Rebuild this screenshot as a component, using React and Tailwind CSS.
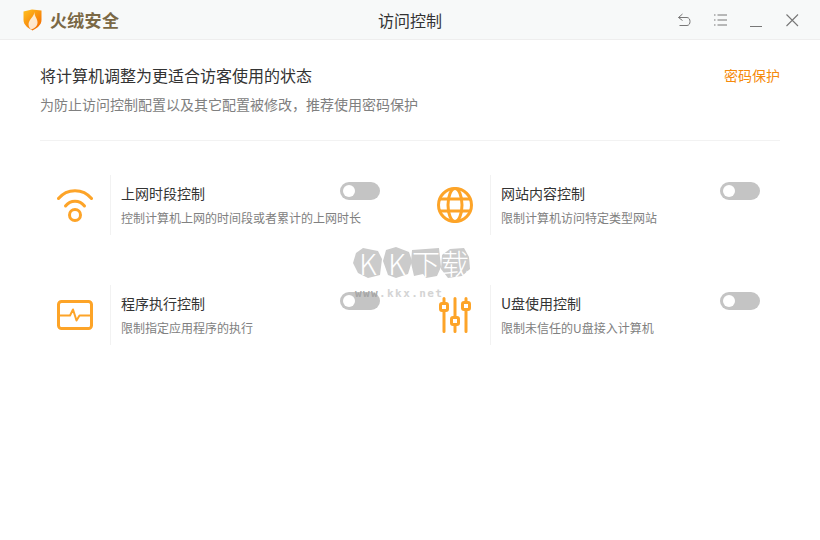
import React from "react";

const cjk = "font-['Microsoft_YaHei','Noto_Sans_CJK_SC',sans-serif]";

function WifiIcon() {
    return (
        <svg width="36" height="34" viewBox="0 0 36 34" fill="none" stroke="#fda428" strokeWidth="3" strokeLinecap="round">
            <path d="M1.500 10.500 C10 0 26 0 34.500 10.500" />
            <path d="M8.500 18 C13.500 11.500 22.500 11.500 27.500 18" />
            <circle cx="18" cy="27" r="5.500" />
        </svg>
    );
}

function GlobeIcon() {
    return (
        <svg width="36" height="36" viewBox="0 0 36 36" fill="none" stroke="#fda428" strokeWidth="3">
            <circle cx="18" cy="18" r="16.500" />
            <ellipse cx="18" cy="18" rx="7" ry="16.500" />
            <path d="M2.500 12 H33.500 M2.500 24 H33.500" />
        </svg>
    );
}

function MonitorIcon() {
    return (
        <svg width="36" height="30" viewBox="0 0 36 30" fill="none" stroke="#fda428" strokeWidth="3" strokeLinejoin="round">
            <rect x="1.500" y="1.500" width="33" height="27" rx="3" />
            <path d="M2 15.500 H13 L16 9.500 L19.500 20.500 L22.500 15.500 H34" strokeWidth="2" />
        </svg>
    );
}

function SlidersIcon() {
    return (
        <svg width="34" height="36" viewBox="0 0 34 36" fill="none" stroke="#fda428" strokeWidth="3" strokeLinecap="round">
            <path d="M6 1.500 V6 M6 14 V34.500" />
            <path d="M17 1.500 V20 M17 28 V34.500" />
            <path d="M28 1.500 V5 M28 13 V34.500" />
            <rect x="2.500" y="6.500" width="7" height="7" rx="1.500" />
            <rect x="13.500" y="20.500" width="7" height="7" rx="1.500" />
            <rect x="24.500" y="5.500" width="7" height="7" rx="1.500" />
        </svg>
    );
}

function Logo() {
    return (
        <svg width="19" height="22" viewBox="0 0 19 22">
            <defs>
                <linearGradient id="shield" x1="0" y1="0" x2="0.8" y2="1">
                    <stop offset="0" stopColor="#ffc21f" />
                    <stop offset="1" stopColor="#f46a00" />
                </linearGradient>
            </defs>
            <path d="M0.500 2.500 L9 0.500 L18.500 1.500 V11 C18.500 16 14 19 9.500 21.500 C5 19 0.500 16 0.500 11 Z" fill="url(#shield)" />
            <path d="M11.500 3 C11 7 15 10 14.500 14 C14 18 10.500 20 8 20.500 C5.500 18 4.500 15 7 11 C8.500 8.500 11 6.500 11.500 3 Z" fill="#fff" opacity="0.8" />
        </svg>
    );
}

function Toggle() {
    return (
        <div className="w-10 h-[18px] rounded-full bg-[#c4c4c4] flex items-center pl-[3px] shrink-0">
            <div className="w-3 h-3 rounded-full bg-white" />
        </div>
    );
}

function Card({ icon, title, desc }) {
    return (
        <div className="flex h-[60px] pl-2.5">
            <div className="w-[50px] flex items-center justify-center shrink-0">{icon}</div>
            <div className="w-px h-full bg-[#f2f2f2] ml-[10px] shrink-0" />
            <div className="flex-1 pl-2.5 pt-[8px]">
                <div className="text-sm leading-5 text-[#333]">{title}</div>
                <div className="text-xs leading-4 text-[#808080] mt-[7px] whitespace-nowrap">{desc}</div>
            </div>
        </div>
    );
}

function ToggleCard(props) {
    return (
        <div className="relative w-[340px]">
            <Card {...props} />
            <div className="absolute right-0 top-[7px]">
                <Toggle />
            </div>
        </div>
    );
}

function Rock({ char, points }) {
    return (
        <div className="relative w-[30px] h-[32px] flex items-center justify-center">
            <svg className="absolute inset-0" width="30" height="32" viewBox="0 0 30 32">
                <polygon points={points} fill="#cbcbcb" />
            </svg>
            <span className="relative text-[28px] leading-none font-light text-white">{char}</span>
        </div>
    );
}

export default function App() {
    return (
        <div className={`relative w-[820px] h-[540px] bg-white overflow-hidden ${cjk}`}>
            {/* title bar */}
            <div className="h-10 bg-[#f7f9f9] border-b border-[#eeeeee] flex items-center pl-[23px] pr-[21px] relative">
                <Logo />
                <span className="ml-2 text-[17px] font-bold tracking-[0.3px] text-[#7a6845]">火绒安全</span>
                <div className="absolute left-0 right-0 text-center text-base text-[#333] pointer-events-none">访问控制</div>
                <div className="ml-auto flex items-center gap-[22px] text-[#777]">
                    <svg width="14" height="14" viewBox="0 0 14 14" fill="none" stroke="currentColor" strokeWidth="1">
                        <path d="M5.500 1 L1.500 4.500 L5.500 7.500 M1.500 4.500 H10 C14 4.500 14 12.500 10 12.500 H2.500" />
                    </svg>
                    <svg width="14" height="14" viewBox="0 0 14 14" fill="none" stroke="currentColor" strokeWidth="1">
                        <path d="M1 2 H2.500 M4.500 2 H14 M1 7 H2.500 M4.500 7 H14 M1 12 H2.500 M4.500 12 H14" />
                    </svg>
                    <svg width="14" height="14" viewBox="0 0 14 14" fill="none" stroke="currentColor" strokeWidth="1">
                        <path d="M1 13.500 H13" />
                    </svg>
                    <svg width="14" height="14" viewBox="0 0 14 14" fill="none" stroke="currentColor" strokeWidth="1.100">
                        <path d="M1.500 1.500 L13 13 M13 1.500 L1.500 13" />
                    </svg>
                </div>
            </div>

            {/* header text */}
            <div className="mx-10 h-[101px] border-b border-[#f2f2f2] pt-[23px] flex justify-between items-start">
                <div>
                    <div className="text-base leading-6 text-[#333]">将计算机调整为更适合访客使用的状态</div>
                    <div className="text-sm leading-5 text-[#808080] mt-[7px]">为防止访问控制配置以及其它配置被修改，推荐使用密码保护</div>
                </div>
                <div className="text-sm leading-6 text-[#f58a0b]">密码保护</div>
            </div>

            {/* options */}
            <div className="mx-10 mt-[34px] grid grid-cols-[380px_340px] gap-y-[50px]">
                <ToggleCard icon={<WifiIcon />} title="上网时段控制" desc="控制计算机上网的时间段或者累计的上网时长" />
                <ToggleCard icon={<GlobeIcon />} title="网站内容控制" desc="限制计算机访问特定类型网站" />
                <ToggleCard icon={<MonitorIcon />} title="程序执行控制" desc="限制指定应用程序的执行" />
                <ToggleCard icon={<SlidersIcon />} title="U盘使用控制" desc="限制未信任的U盘接入计算机" />
            </div>

            {/* watermark */}
            <div className="absolute left-[353px] top-[247px] w-[117px]">
                <div className="flex -space-x-[1px]">
                    <Rock char="K" points="3,6 10,1 25,4 29,12 27,28 15,31 5,26 0,16" />
                    <Rock char="K" points="4,3 14,0 27,5 30,14 26,27 14,31 6,28 1,14" />
                    <Rock char="下" points="1,3 28,1 30,20 26,29 15,31 12,27 3,29 0,16" />
                    <Rock char="载" points="2,8 10,2 24,1 29,10 30,22 22,29 8,31 1,22" />
                </div>
                <div className="ml-[2px] mt-[9px] text-[11px] leading-3 font-bold tracking-[1.400px] text-[#d4d4d4] font-['DejaVu_Sans_Mono',monospace] whitespace-nowrap">
                    <span className="text-[#a6a6a6]">www</span>.kkx.net
                </div>
            </div>
        </div>
    );
}
